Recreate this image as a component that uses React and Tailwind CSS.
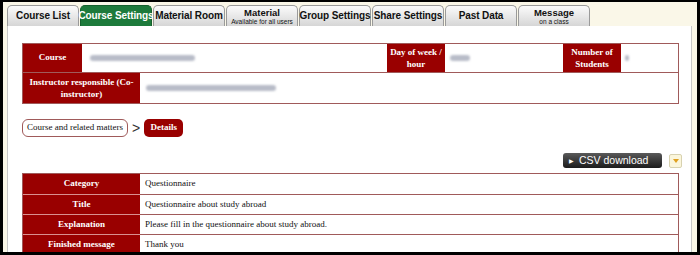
import { useState } from "react";

const tabs = [
  { label: "Course List" },
  { label: "Course Settings", active: true },
  { label: "Material Room" },
  { label: "Material", sub: "Available for all users" },
  { label: "Group Settings" },
  { label: "Share Settings" },
  { label: "Past Data" },
  { label: "Message", sub: "on a class" },
];

const details = [
  { th: "Category", td: "Questionnaire" },
  { th: "Title", td: "Questionnaire about study abroad" },
  { th: "Explanation", td: "Please fill in the questionnaire about study abroad." },
  { th: "Finished message", td: "Thank you" },
];

function Tab({ tab }) {
  const base =
    "w-[72px] h-[21px] rounded-t-[5px] border border-b-0 flex flex-col items-center justify-center leading-none whitespace-nowrap font-['Liberation_Sans',Arial,sans-serif] font-bold";
  const look = tab.active
    ? " bg-[#1d7a3b] border-[#15602d] text-white"
    : " bg-gradient-to-b from-[#fbfbfb] to-[#d6d6d6] border-[#9a9a9a] text-[#111]";
  return (
    <div className={base + look}>
      {tab.sub ? (
        <>
          <span className="text-[9.5px] leading-[10px]">{tab.label}</span>
          <span className="text-[6.5px] font-normal leading-[7px]">{tab.sub}</span>
        </>
      ) : (
        <span className="text-[10px] tracking-[-0.1px]">{tab.label}</span>
      )}
    </div>
  );
}

function Blur({ w }) {
  return <span className={"inline-block h-[6px] rounded bg-[#b8bcc8] blur-[1.3px] " + w} />;
}

export default function App() {
  const [selected] = useState("details");

  return (
    <div className="w-[700px] h-[255px] overflow-hidden border-black border-t-2 border-x-[3px] border-b-[3px] bg-[#faf7e8] font-['Liberation_Serif',serif]">
      <div className="flex gap-[1px] pl-[4px] pt-[3px]">
        {tabs.map((t) => (
          <Tab key={t.label} tab={t} />
        ))}
      </div>

      <div className="ml-[4px] w-[685px] h-[230px] bg-white border-x border-[#c8c8c8] pl-[14px] pt-[17px]">
        {/* course summary */}
        <div className="w-[657px] border border-[#a05a5a] text-[9px]">
          <div className="flex h-[29px] border-b border-[#a05a5a]">
            <div className="w-[59px] bg-[#990000] text-white font-bold flex items-center justify-center">Course</div>
            <div className="w-[305px] flex items-center pl-[8px]">
              <Blur w="w-[105px]" />
            </div>
            <div className="w-[58px] bg-[#990000] text-white font-bold flex items-center justify-center text-center leading-[12px]">
              Day of week /<br />hour
            </div>
            <div className="w-[118px] flex items-center pl-[5px]">
              <Blur w="w-[20px]" />
            </div>
            <div className="w-[58px] bg-[#990000] text-white font-bold flex items-center justify-center text-center leading-[12px]">
              Number of<br />Students
            </div>
            <div className="flex-1 flex items-center pl-[4px]">
              <Blur w="w-[4px]" />
            </div>
          </div>
          <div className="flex h-[30px]">
            <div className="w-[117px] bg-[#990000] text-white font-bold flex items-center justify-center text-center leading-[12px]">
              Instructor responsible (Co-<br />instructor)
            </div>
            <div className="flex-1 flex items-center pl-[6px]">
              <Blur w="w-[130px]" />
            </div>
          </div>
        </div>

        {/* breadcrumb */}
        <div className="flex items-center mt-[15px] h-[18px] text-[9px]">
          <div className="h-[18px] w-[106px] whitespace-nowrap border border-[#a05a5a] rounded-[6px] flex items-center justify-center text-[#111]">
            Course and related matters
          </div>
          <span className="mx-[4px] text-[#333] text-[14px] leading-none font-['Liberation_Sans',sans-serif]">&gt;</span>
          <div className="h-[18px] w-[39px] rounded-[5px] bg-[#990000] text-white font-bold flex items-center justify-center">
            {selected === "details" ? "Details" : ""}
          </div>
        </div>

        {/* csv */}
        <div className="flex justify-end items-center w-[660px] mt-[16px] gap-[7px]">
          <button className="h-[15px] w-[99px] rounded-[3px] bg-gradient-to-b from-[#5a5a5a] to-[#1c1c1c] text-white text-[10.5px] font-['Liberation_Sans',Arial,sans-serif] flex items-center pl-[6px] gap-[5px] leading-none">
            <span className="text-[6px]">▶</span>CSV download
          </button>
          <button className="h-[14px] w-[13px] rounded-[2px] border border-[#d8d2b0] bg-[#fbf6dc] flex items-center justify-center">
            <span className="w-0 h-0 border-x-[3px] border-x-transparent border-t-[4px] border-t-[#e0a020]" />
          </button>
        </div>

        {/* details table */}
        <div className="w-[657px] mt-[5px] border border-[#a05a5a] text-[9px]">
          {details.map((r, i) => (
            <div key={r.th} className={"flex h-[20px] " + (i > 0 ? "border-t border-[#a05a5a]" : "")}>
              <div className={"w-[117px] bg-[#990000] text-white font-bold flex items-center justify-center " + (i > 0 ? "border-t border-[#d99090] -mt-[1px]" : "")}>
                {r.th}
              </div>
              <div className="flex-1 flex items-center pl-[5px] text-[#111]">{r.td}</div>
            </div>
          ))}
        </div>
      </div>
    </div>
  );
}
